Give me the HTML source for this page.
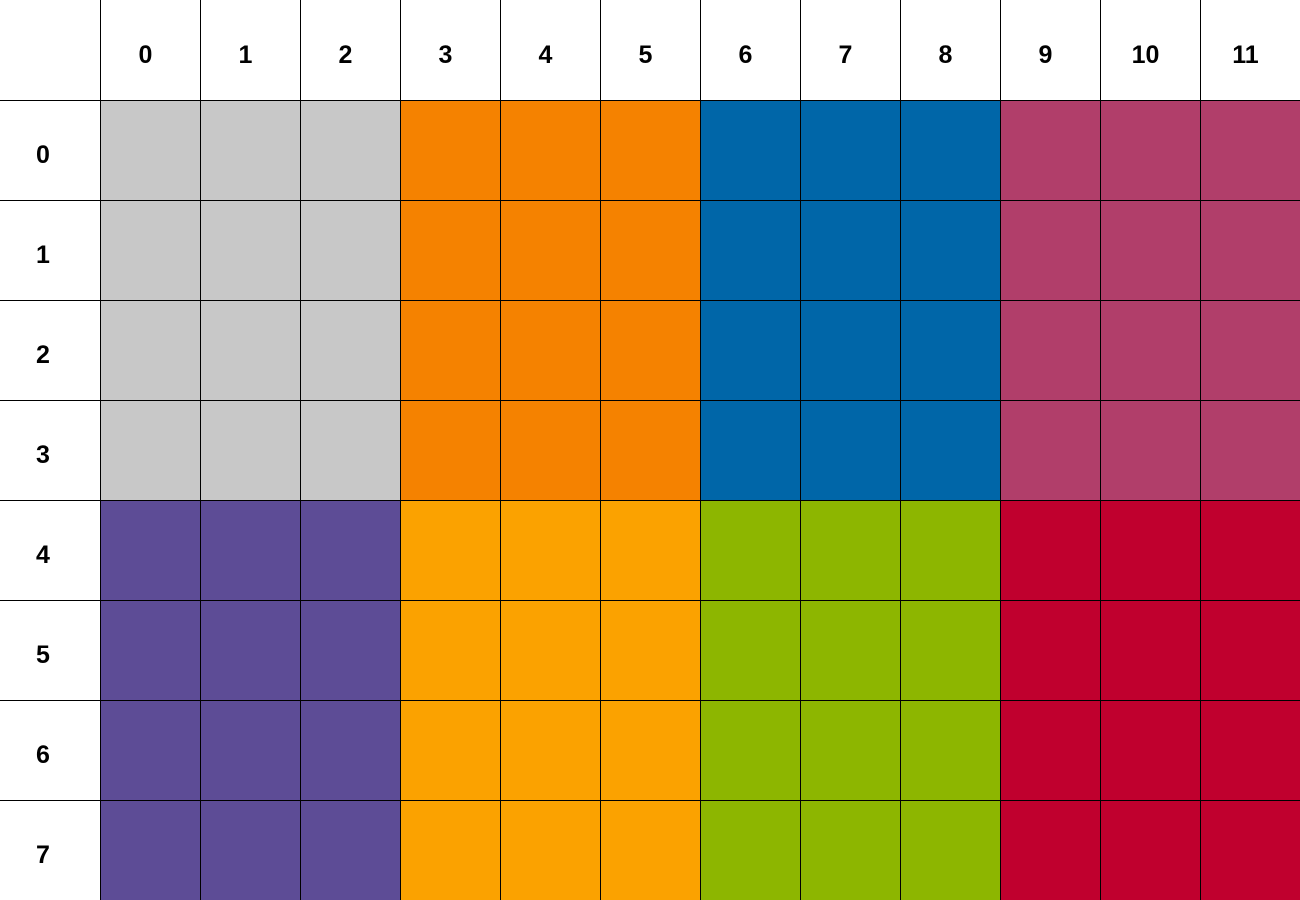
<!DOCTYPE html>
<html><head><meta charset="utf-8"><style>
html,body{margin:0;padding:0;background:#fff;width:1300px;height:900px;overflow:hidden}
.c{position:absolute;width:100px;height:100px;box-sizing:border-box;display:flex;align-items:center;justify-content:center;font:bold 25px "Liberation Sans",sans-serif;color:#000}
</style></head><body>
<script>
var colors=[["#c8c8c8","#f58200","#0066a8","#b13e6a"],["#5d4c96","#fba200","#8db600","#c0002e"]];
var h="";
for(var r=0;r<9;r++)for(var c=0;c<13;c++){
 var x=c*100,y=r*100,st="left:"+x+"px;top:"+y+"px;";
 var t="";
 if(r==0&&c==0){}
 else if(r==0){st+="border-left:1px solid #000;";t=c-1;}
 else if(c==0){st+="border-top:1px solid #000;";t=r-1;}
 else{st+="border-left:1px solid #000;border-top:1px solid #000;background:"+colors[r<=4?0:1][Math.floor((c-1)/3)]+";";}
 if(t!=="")st+="padding-right:"+(c==0?14:10)+"px;padding-top:10px;";
 h+='<div class="c" style="'+st+'">'+t+'</div>';
}
document.write(h);
</script>
</body></html>
